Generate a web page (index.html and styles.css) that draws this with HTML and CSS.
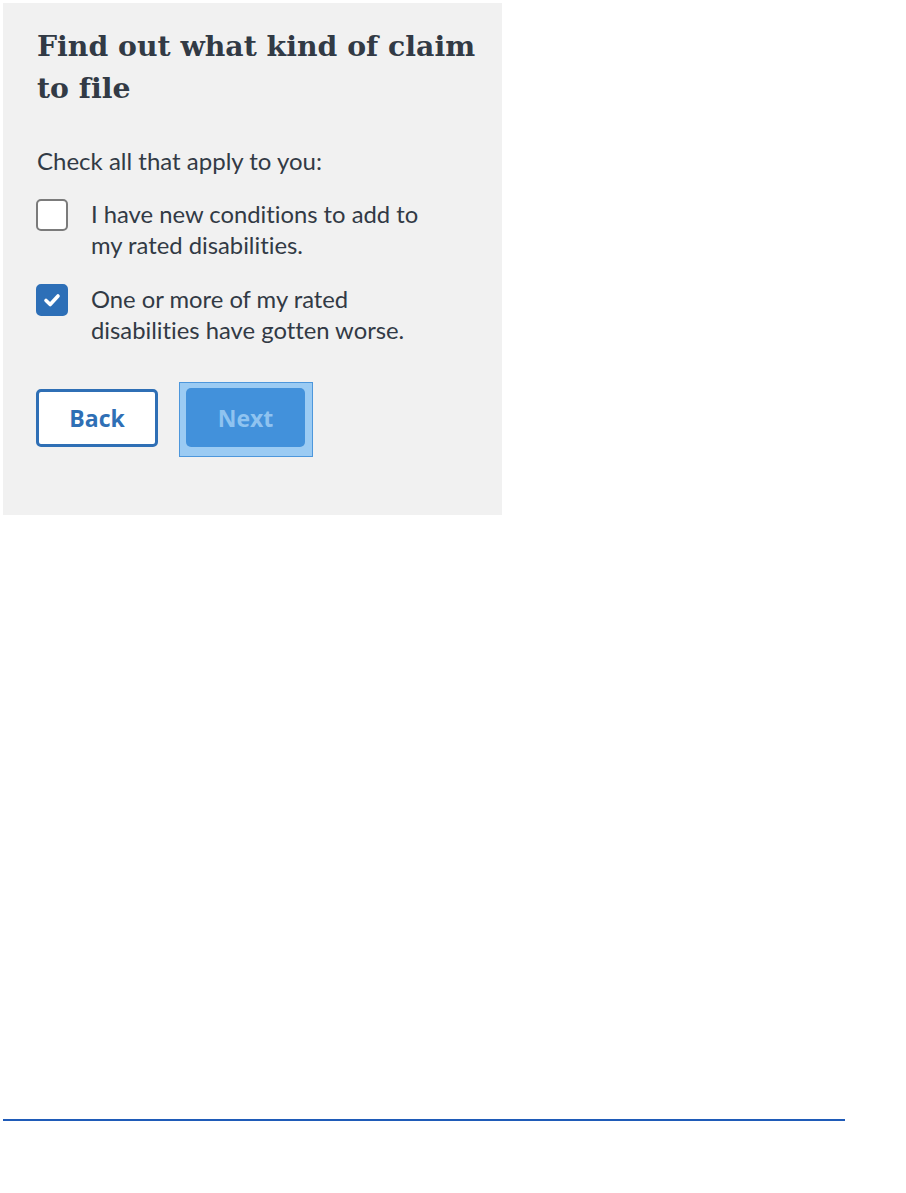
FILE: index.html
```html
<!DOCTYPE html>
<html lang="en">
<head>
  <meta charset="UTF-8">
  <title>Find out what kind of claim to file</title>
  <link rel="stylesheet" href="styles.css">
</head>
<body>

  <div class="panel">
    <h1>Find out what kind of claim to file</h1>
    <p class="prompt">Check all that apply to you:</p>

    <ul class="options">
      <li class="option">
        <span class="box"></span>
        <span class="label">I have new conditions to add to my rated disabilities.</span>
      </li>
      <li class="option">
        <span class="box checked">
          <svg width="20" height="20" viewBox="0 0 20 20"><path d="M4 10.5 L8.2 14.5 L16 6" fill="none" stroke="#fff" stroke-width="3.6" stroke-linecap="round" stroke-linejoin="round"/></svg>
        </span>
        <span class="label">One or more of my rated disabilities have gotten worse.</span>
      </li>
    </ul>

    <div class="actions">
      <button class="btn back">Back</button>
      <span class="focus-ring"><button class="btn next">Next</button></span>
    </div>
  </div>

  <div class="rule"></div>

</body>
</html>
```

FILE: styles.css
```css
* { margin: 0; padding: 0; box-sizing: border-box; }
body {
  background-color: #ffffff;
  font-family: Lato, "Open Sans", sans-serif;
  font-variant-ligatures: none;
  color: #323a45;
}
.panel {
  margin: 3px;
  width: 499px;
  background-color: #f1f1f1;
  padding: 22px 20px 58px 33px;
}
h1 {
  font-family: "DejaVu Serif", serif;
  font-size: 28.3px;
  font-weight: bold;
  line-height: 42px;
  margin-left: 1px;
}
.prompt {
  margin-top: 36px;
  margin-left: 1px;
  font-size: 24px;
  line-height: 31px;
}
.options {
  list-style: none;
  margin-top: 23px;
}
.option {
  display: flex;
  align-items: flex-start;
  gap: 23px;
  font-size: 23.8px;
  line-height: 31px;
  margin-bottom: 23px;
  padding-right: 50px;
}
.box {
  flex: none;
  width: 32px;
  height: 32px;
  background-color: #ffffff;
  border: 2px solid #7b7b7b;
  border-radius: 5px;
  display: flex;
  justify-content: center;
  align-items: center;
}
.box.checked {
  background-color: #2d6fb7;
  border-color: #2d6fb7;
}
.actions {
  display: flex;
  align-items: flex-start;
  gap: 21px;
  margin-top: 36px;
}
.btn {
  font-family: "Open Sans", sans-serif;
  font-size: 23px;
  font-weight: bold;
  border-radius: 5px;
  height: 58px;
  cursor: pointer;
}
.back {
  width: 122px;
  margin-top: 7px;
  background-color: #ffffff;
  color: #2f6fb5;
  border: 3px solid #2f6fb5;
}
.focus-ring {
  display: block;
  padding: 5px 7px 9px 6px;
  background-color: #9bcbf3;
  border: 1px solid #4d97dc;
}
.next {
  display: block;
  width: 119px;
  height: 59px;
  background-color: #4291db;
  color: #8fc3f0;
  border: none;
}
.rule {
  margin: 604px 0 0 3px;
  width: 842px;
  border-top: 2px solid #1f5bb8;
}
```
